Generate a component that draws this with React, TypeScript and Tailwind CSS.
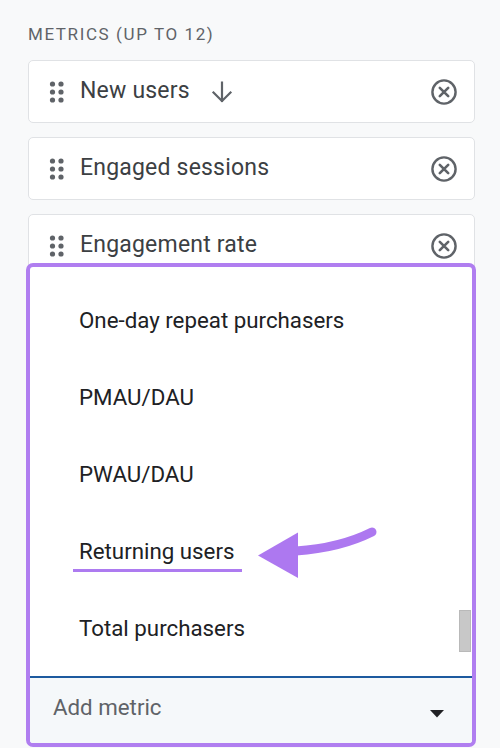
import React from "react";

const DragHandle = () => (
  <svg width="16" height="22" viewBox="0 0 16 22" className="shrink-0">
    {[3, 11, 19].map((y) =>
      [3.5, 12].map((x) => <circle key={`${x}-${y}`} cx={x} cy={y} r="2.6" fill="#5f6368" />)
    )}
  </svg>
);

const CancelIcon = () => (
  <svg width="28" height="28" viewBox="0 0 28 28" className="shrink-0">
    <circle cx="14" cy="14" r="11.6" fill="none" stroke="#5f6368" strokeWidth="2.4" />
    <path d="M9.8 9.8 L18.2 18.2 M18.2 9.8 L9.8 18.2" stroke="#5f6368" strokeWidth="2.6" strokeLinecap="round" />
  </svg>
);

const ArrowDown = () => (
  <svg width="24" height="24" viewBox="0 0 24 24" className="shrink-0">
    <path d="M12 2.5 V21 M3.5 12.5 L12 21 L20.5 12.5" fill="none" stroke="#5f6368" strokeWidth="2.2" strokeLinecap="square" />
  </svg>
);

const Card = ({ label, arrow }: { label: string; arrow?: boolean }) => (
  <div className="h-[63px] mb-[14px] bg-white border border-[#e0e2e5] rounded-[5px] flex items-center pl-[20px] pr-[16px]">
    <DragHandle />
    <span className="ml-[15px] text-[23px] text-[#3c4043] tracking-[0.2px]">{label}</span>
    {arrow && (
      <span className="ml-[20px] flex items-center">
        <ArrowDown />
      </span>
    )}
    <span className="ml-auto flex items-center">
      <CancelIcon />
    </span>
  </div>
);

const items = [
  "One-day repeat purchasers",
  "PMAU/DAU",
  "PWAU/DAU",
  "Returning users",
  "Total purchasers",
];

export default function App() {
  return (
    <div
      className="w-[500px] h-[748px] bg-[#f8f9fa] overflow-hidden pl-[28px] pr-[25px] pt-[24px]"
      style={{ fontFamily: "Roboto, 'Noto Sans', sans-serif" }}
    >
      <div className="h-[20px] mb-[16px] text-[17px] leading-[20px] tracking-[1.6px] text-[#5f6368]">
        METRICS (UP TO 12)
      </div>
      <Card label="New users" arrow />
      <Card label="Engaged sessions" />
      <Card label="Engagement rate" />
      <div className="relative z-10 -mt-[28px] -ml-[2px] w-[450px] h-[484px] border-4 border-[#b07ef0] rounded-[7px] bg-white flex flex-col overflow-hidden">
        <div className="relative h-[409px] pt-[15px]">
          {items.map((t) => (
            <div key={t} className="h-[77px] flex items-center pl-[49px] text-[22.3px] text-[#202124]">
              {t}
            </div>
          ))}
          <div className="absolute right-[1px] top-[343px] w-[12px] h-[42px] bg-[#c8c8c8] border border-[#b9b9b9]" />
          <div className="absolute left-[43px] top-[302px] w-[169px] h-[3px] bg-[#ad7bf0]" />
          <svg
            className="absolute left-0 top-0 pointer-events-none"
            width="442"
            height="409"
            viewBox="30 267 442 409"
          >
            <path d="M296 551 Q340 548 372 532" fill="none" stroke="#ad78f0" strokeWidth="9" strokeLinecap="round" />
            <path d="M258 555.5 L298 532.5 L298 578 Z" fill="#ad78f0" />
          </svg>
        </div>
        <div className="h-[2px] bg-[#1d5a9f]" />
        <div className="flex-1 bg-[#f5f8fa] flex items-center pl-[23px] pr-[28px]">
          <span className="text-[22.3px] text-[#5f6368] -mt-[6px]">Add metric</span>
          <svg width="14" height="8" viewBox="0 0 14 8" className="ml-auto mt-[6px]">
            <path d="M0 0 L14 0 L7 7.5 Z" fill="#202124" />
          </svg>
        </div>
      </div>
    </div>
  );
}
